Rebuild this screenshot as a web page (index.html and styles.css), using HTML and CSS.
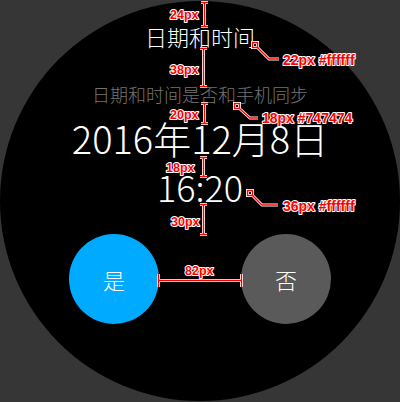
FILE: index.html
```html
<!DOCTYPE html>
<html lang="zh-CN">
<head>
<meta charset="utf-8">
<title>日期和时间</title>
<link rel="stylesheet" href="styles.css">
</head>
<body>
<div class="screen">
  <div class="dial">
    <h1 class="title">日期和时间</h1>
    <p class="subtitle">日期和时间是否和手机同步</p>
    <p class="date">2016年12月8日</p>
    <p class="time">16:20</p>
    <div class="actions">
      <button class="btn btn-yes">是</button>
      <button class="btn btn-no">否</button>
    </div>
  </div>
  <svg class="notes" width="400" height="402" viewBox="0 0 400 402">
    <g class="halo">
      <path d="M204.5 1.5 V25.5 M201 1.5 H208 M201 25.5 H208"/>
      <path d="M203.5 47.5 V85.5 M200 47.5 H207 M200 85.5 H207"/>
      <path d="M204.5 102.5 V122.5 M201 102.5 H208 M201 122.5 H208"/>
      <path d="M203.5 156.5 V175.5 M200 156.5 H207 M200 175.5 H207"/>
      <path d="M203.5 203.5 V233.5 M200 203.5 H207 M200 233.5 H207"/>
      <path d="M158.5 279.5 H241.5 M158.5 273 V286 M241.5 273 V286"/>
      <rect x="252.5" y="41.5" width="5" height="5"/>
      <path d="M257 46 L269 58 H279"/>
      <rect x="234.5" y="102.5" width="5" height="5"/>
      <path d="M240 108 L250 117 H258"/>
      <rect x="247.5" y="189.5" width="5" height="5"/>
      <path d="M252 194 L262 204 H278"/>
    </g>
    <g class="line">
      <path d="M204.5 1.5 V25.5 M201 1.5 H208 M201 25.5 H208"/>
      <path d="M203.5 47.5 V85.5 M200 47.5 H207 M200 85.5 H207"/>
      <path d="M204.5 102.5 V122.5 M201 102.5 H208 M201 122.5 H208"/>
      <path d="M203.5 156.5 V175.5 M200 156.5 H207 M200 175.5 H207"/>
      <path d="M203.5 203.5 V233.5 M200 203.5 H207 M200 233.5 H207"/>
      <path d="M158.5 279.5 H241.5 M158.5 273 V286 M241.5 273 V286"/>
      <rect x="252.5" y="41.5" width="5" height="5"/>
      <path d="M257 46 L269 58 H279"/>
      <rect x="234.5" y="102.5" width="5" height="5"/>
      <path d="M240 108 L250 117 H258"/>
      <rect x="247.5" y="189.5" width="5" height="5"/>
      <path d="M252 194 L262 204 H278"/>
    </g>
    <g class="dim-label">
      <text x="170" y="18">24px</text>
      <text x="170" y="73">38px</text>
      <text x="170" y="118">20px</text>
      <text x="166" y="171">18px</text>
      <text x="171" y="225">30px</text>
      <text x="185" y="274">82px</text>
    </g>
    <g class="callout-label">
      <text x="283" y="64">22px #ffffff</text>
      <text x="262" y="122">18px #747474</text>
      <text x="283" y="210">36px #ffffff</text>
    </g>
  </svg>
</div>
</body>
</html>
```

FILE: styles.css
```css
html, body {
  margin: 0;
  padding: 0;
}

body {
  background: #363636;
  width: 400px;
  height: 402px;
  overflow: hidden;
  font-family: "Noto Sans CJK SC", "Noto Sans", sans-serif;
}

.screen {
  position: relative;
  width: 400px;
  height: 402px;
}

.dial {
  box-sizing: border-box;
  width: 400px;
  height: 400px;
  margin-top: 1px;
  border-radius: 50%;
  background: #000;
  padding-top: 24px;
  display: flex;
  flex-direction: column;
  align-items: center;
  color: #fff;
}

.title,
.subtitle,
.date,
.time {
  margin: 0;
  font-weight: 300;
  line-height: 1;
  white-space: nowrap;
}

.title {
  font-size: 22px;
  color: #ffffff;
}

.subtitle {
  margin-top: 38px;
  font-size: 18px;
  color: #747474;
}

.date {
  margin-top: 16px;
  font-size: 38px;
  color: #ffffff;
}

.time {
  margin-top: 11px;
  font-size: 36px;
  color: #ffffff;
}

.actions {
  margin-top: 30px;
  display: flex;
  gap: 82px;
}

.btn {
  width: 90px;
  height: 90px;
  border: none;
  border-radius: 50%;
  padding: 0;
  color: #fff;
  font-family: "Noto Sans CJK SC", "Noto Sans", sans-serif;
  font-weight: 300;
  font-size: 22px;
  line-height: 1;
  display: flex;
  align-items: center;
  justify-content: center;
}

.btn-yes {
  background: #00aaff;
}

.btn-no {
  background: #5a5a5a;
}

.notes {
  position: absolute;
  left: 0;
  top: 0;
  pointer-events: none;
}

.halo {
  fill: none;
  stroke: #ffffff;
  stroke-width: 3;
}

.line {
  fill: none;
  stroke: #ff0000;
  stroke-width: 1.4;
}

.dim-label text,
.callout-label text {
  font-family: "Liberation Sans", Arial, sans-serif;
  font-weight: bold;
  fill: #ff0000;
  stroke: #ffffff;
  stroke-width: 2;
  paint-order: stroke;
  stroke-linejoin: round;
}

.dim-label text {
  font-size: 12.5px;
}

.callout-label text {
  font-size: 14px;
}
```
